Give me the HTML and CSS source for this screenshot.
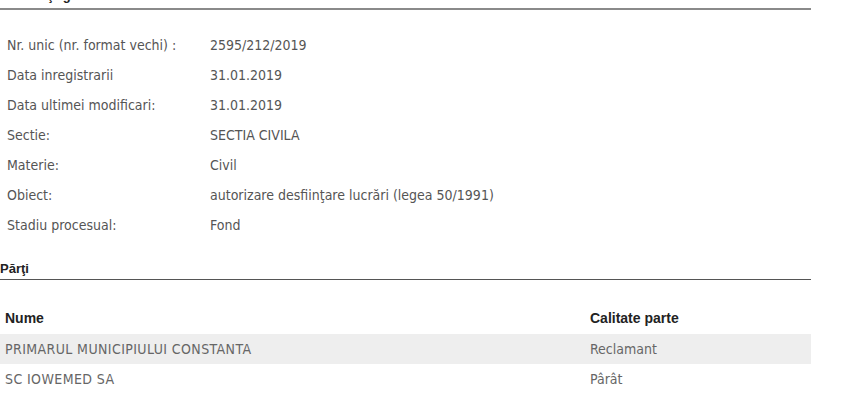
FILE: index.html
```html
<!DOCTYPE html>
<html lang="ro">
<head>
<meta charset="utf-8">
<link rel="stylesheet" href="styles.css">
</head>
<body>
<div class="page">
  <h2 class="section-title first">Informaţii generale</h2>
  <div class="info">
    <div class="row"><span class="label">Nr. unic (nr. format vechi) :</span><span class="value">2595/212/2019</span></div>
    <div class="row"><span class="label">Data inregistrarii</span><span class="value">31.01.2019</span></div>
    <div class="row"><span class="label">Data ultimei modificari:</span><span class="value">31.01.2019</span></div>
    <div class="row"><span class="label">Sectie:</span><span class="value">SECTIA CIVILA</span></div>
    <div class="row"><span class="label">Materie:</span><span class="value">Civil</span></div>
    <div class="row"><span class="label">Obiect:</span><span class="value">autorizare desfiinţare lucrări (legea 50/1991)</span></div>
    <div class="row"><span class="label">Stadiu procesual:</span><span class="value">Fond</span></div>
  </div>
  <h2 class="section-title second">Părţi</h2>
  <table class="parti">
    <thead>
      <tr><th class="c-name">Nume</th><th class="c-role">Calitate parte</th></tr>
    </thead>
    <tbody>
      <tr class="alt"><td class="c-name">PRIMARUL MUNICIPIULUI CONSTANTA</td><td>Reclamant</td></tr>
      <tr><td class="c-name">SC IOWEMED SA</td><td>Pârât</td></tr>
    </tbody>
  </table>
</div>
</body>
</html>
```

FILE: styles.css
```css
html, body {
  margin: 0;
  padding: 0;
  background: #fff;
}
.page {
  width: 811px;
  font-family: "DejaVu Sans Condensed", "DejaVu Sans", sans-serif;
  font-size: 14px;
  color: #555;
}
.section-title {
  font-family: "Liberation Sans", Arial, sans-serif;
  font-weight: bold;
  font-size: 13px;
  color: #222;
  margin: 0;
  padding: 0 0 4px 0;
}
.section-title.first {
  margin-top: -12px;
  line-height: 16px;
  border-bottom: 2px solid #8a8a8a;
}
.section-title.second {
  margin-top: 21px;
  line-height: 16px;
  padding-bottom: 2px;
  border-bottom: 1px solid #555;
}
.info {
  padding: 20px 0 0 7px;
}
.row {
  display: flex;
  height: 30px;
  align-items: center;
}
.label {
  width: 203px;
  flex: none;
}
.parti {
  width: 811px;
  border-collapse: collapse;
  margin-top: 22px;
}
.parti th {
  font-family: "Liberation Sans", Arial, sans-serif;
  font-weight: bold;
  font-size: 14px;
  color: #222;
  text-align: left;
  height: 32px;
  padding: 0 5px;
  vertical-align: middle;
}
.parti td {
  height: 30px;
  padding: 0 5px;
  color: #666;
  vertical-align: middle;
}
.parti td.c-name {
  letter-spacing: 0.4px;
}
.parti .c-role {
  width: 216px;
}
.parti tr.alt td {
  background: #eee;
}
```
